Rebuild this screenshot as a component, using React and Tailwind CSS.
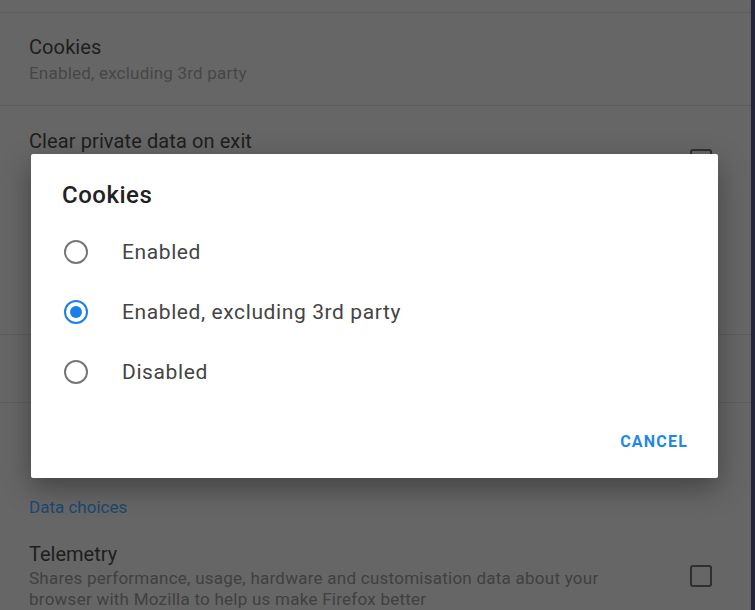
import React from 'react';

const font = { fontFamily: 'Roboto, "Noto Sans", sans-serif' };

function Radio({ checked }) {
  if (checked) {
    return (
      <span className="flex h-[24px] w-[24px] shrink-0 items-center justify-center rounded-full border-[2px] border-[#1a7fe8]">
        <span className="h-[12px] w-[12px] rounded-full bg-[#1a7fe8]" />
      </span>
    );
  }
  return <span className="h-[24px] w-[24px] shrink-0 rounded-full border-[2px] border-[#777]" />;
}

function Checkbox({ className = '' }) {
  return <span className={`block h-[22px] w-[22px] shrink-0 rounded-[3px] border-[2px] border-[#2f2f2f] ${className}`} />;
}

const options = [
  { label: 'Enabled', checked: false },
  { label: 'Enabled, excluding 3rd party', checked: true },
  { label: 'Disabled', checked: false },
];

export default function App() {
  return (
    <div className="relative flex h-[610px] w-[755px] overflow-hidden bg-[#666]" style={font}>
      <div className="flex flex-1 flex-col">
        <div className="h-[13px] border-b border-[#5d5d5d]" />

        <div className="h-[93px] border-b border-[#5d5d5d] pl-[29px] pt-[22px]">
          <div className="text-[20px] leading-[24px] tracking-[0.1px] text-[#1e1e1e]">Cookies</div>
          <div className="mt-[4px] text-[17px] leading-[20px] tracking-[0.2px] text-[#464646]">Enabled, excluding 3rd party</div>
        </div>

        <div className="flex h-[114px] items-start justify-between pl-[29px] pr-[39px] pt-[23px]">
          <div className="text-[20px] leading-[24px] tracking-[0.1px] text-[#1e1e1e]">Clear private data on exit</div>
          <Checkbox className="mt-[20px]" />
        </div>

        <div className="h-[114px]" />

        <div className="h-[69px] border-t border-b border-[#5d5d5d]" />

        <div className="h-[80px]" />

        <div className="pl-[29px] pt-[14px] text-[17px] leading-[20px] text-[#1b4870]">Data choices</div>

        <div className="flex items-start justify-between pl-[29px] pr-[39px] pt-[25px]">
          <div>
            <div className="text-[20px] leading-[24px] text-[#1e1e1e]">Telemetry</div>
            <div className="mt-[2px] w-[600px] text-[17px] leading-[21px] tracking-[0.25px] text-[#404040]">
              Shares performance, usage, hardware and customisation data about your browser with Mozilla to help us make Firefox better
            </div>
          </div>
          <Checkbox className="mt-[23px]" />
        </div>
      </div>

      <div className="w-[4px] bg-[#24243a]" />

      <div className="absolute left-[31px] top-[154px] h-[324px] w-[687px] rounded-[2px] bg-white shadow-[0_10px_28px_rgba(0,0,0,0.35)]">
        <div className="pl-[31px] pt-[26px] text-[24px] font-medium leading-[30px] tracking-[0.5px] text-[#222]">Cookies</div>
        <div className="mt-[12px]">
          {options.map((o) => (
            <div key={o.label} className="flex h-[60px] items-center pl-[33px]">
              <Radio checked={o.checked} />
              <span className="ml-[34px] text-[21px] leading-[24px] tracking-[0.6px] text-[#444]">{o.label}</span>
            </div>
          ))}
        </div>
        <div className="mt-[30px] flex justify-end pr-[30px]">
          <button type="button" className="text-[16px] font-bold leading-[20px] tracking-[1.2px] text-[#1e88e5]">
            CANCEL
          </button>
        </div>
      </div>
    </div>
  );
}
